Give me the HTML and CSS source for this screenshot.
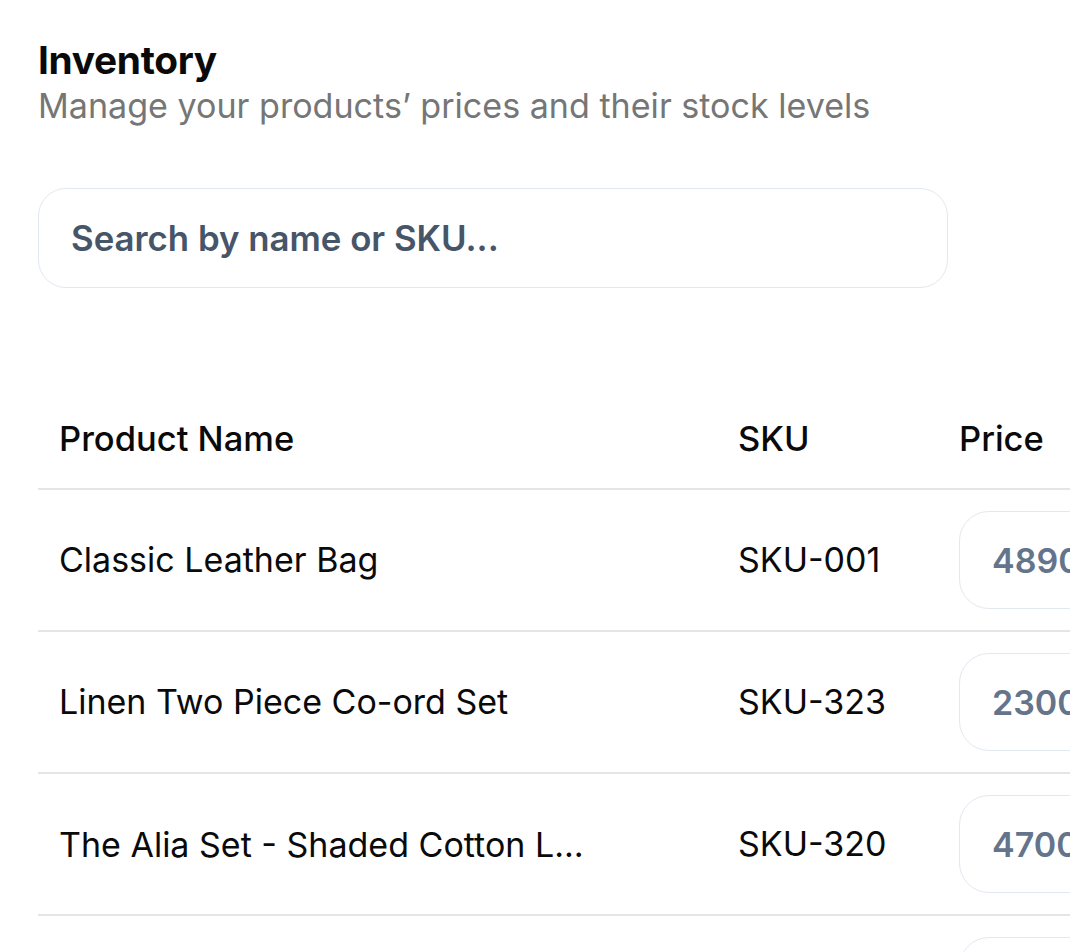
FILE: index.html
```html
<!DOCTYPE html>
<html lang="en">
<head>
<meta charset="utf-8">
<title>Inventory</title>
<link rel="stylesheet" href="styles.css">
</head>
<body>
<main class="page">
  <header class="page-head">
    <h1 class="title">Inventory</h1>
    <p class="subtitle">Manage your products’ prices and their stock levels</p>
  </header>
  <input class="search" type="text" placeholder="Search by name or SKU...">
  <div class="table-wrap">
    <table class="inv-table">
      <thead>
        <tr>
          <th class="col-name">Product Name</th>
          <th class="col-sku">SKU</th>
          <th class="col-price">Price</th>
          <th class="col-stock">Stock</th>
        </tr>
      </thead>
      <tbody>
        <tr>
          <td>Classic Leather Bag</td>
          <td>SKU-001</td>
          <td><input class="cell-input" type="text" value="4890"></td>
          <td><input class="cell-input" type="text" value="12"></td>
        </tr>
        <tr>
          <td>Linen Two Piece Co-ord Set</td>
          <td>SKU-323</td>
          <td><input class="cell-input" type="text" value="2300"></td>
          <td><input class="cell-input" type="text" value="8"></td>
        </tr>
        <tr>
          <td><span class="truncate">The Alia Set - Shaded Cotton Linen Set</span></td>
          <td>SKU-320</td>
          <td><input class="cell-input" type="text" value="4700"></td>
          <td><input class="cell-input" type="text" value="5"></td>
        </tr>
        <tr>
          <td>Silk Wrap Dress</td>
          <td>SKU-215</td>
          <td><input class="cell-input" type="text" value="3600"></td>
          <td><input class="cell-input" type="text" value="3"></td>
        </tr>
      </tbody>
    </table>
  </div>
</main>
</body>
</html>
```
FILE: styles.css
```css
html, body {
  margin: 0;
  padding: 0;
  background: #ffffff;
  overflow: hidden;
}
body {
  font-family: Inter, "Noto Sans", sans-serif;
  color: #0a0a0a;
}
.page {
  padding: 36px 0 0 38px;
  width: 1600px;
}
.page-head {
  display: flex;
  flex-direction: column;
}
.title {
  margin: 0;
  font-size: 38.8px;
  line-height: 48px;
  font-weight: 700;
  color: #0a0a0a;
  letter-spacing: -0.3px;
}
.subtitle {
  margin: 0;
  font-size: 34.1px;
  line-height: 44px;
  font-weight: 400;
  color: #767676;
}
.search {
  display: block;
  box-sizing: border-box;
  margin-top: 60px;
  width: 910px;
  height: 100px;
  padding: 0 32px;
  border: 1.5px solid #e2e8f0;
  border-radius: 28px;
  font-family: Inter, "Noto Sans", sans-serif;
  font-size: 34.8px;
  font-weight: 600;
  color: #475569;
  background: #fff;
  outline: none;
}
.search::placeholder {
  color: #475569;
  opacity: 1;
}
.table-wrap {
  margin-top: 102px;
  overflow: hidden;
}
.inv-table {
  border-collapse: collapse;
  table-layout: fixed;
  width: 1500px;
  font-size: 34px;
}
.inv-table th,
.inv-table td {
  box-sizing: border-box;
  padding: 21px;
  text-align: left;
  border-bottom: 2px solid #e5e5e5;
  white-space: nowrap;
  vertical-align: middle;
  overflow: hidden;
}
.inv-table th {
  font-size: 34.5px;
  font-weight: 500;
  line-height: 56px;
  color: #0a0a0a;
}
.inv-table td {
  font-weight: 400;
  line-height: 40px;
  height: 142px;
  color: #0a0a0a;
}
.col-name { width: 679px; }
.col-sku { width: 221px; }
.col-price { width: 300px; }
.col-stock { width: 300px; }
.truncate {
  display: inline-block;
  max-width: 528px;
  overflow: hidden;
  text-overflow: ellipsis;
  vertical-align: middle;
}
.cell-input {
  display: block;
  box-sizing: border-box;
  width: 258px;
  height: 98px;
  padding: 0 32px;
  border: 1.5px solid #e2e8f0;
  border-radius: 30px;
  font-family: Inter, "Noto Sans", sans-serif;
  font-size: 34px;
  font-weight: 600;
  color: #64748b;
  background: #fff;
  outline: none;
}
```
